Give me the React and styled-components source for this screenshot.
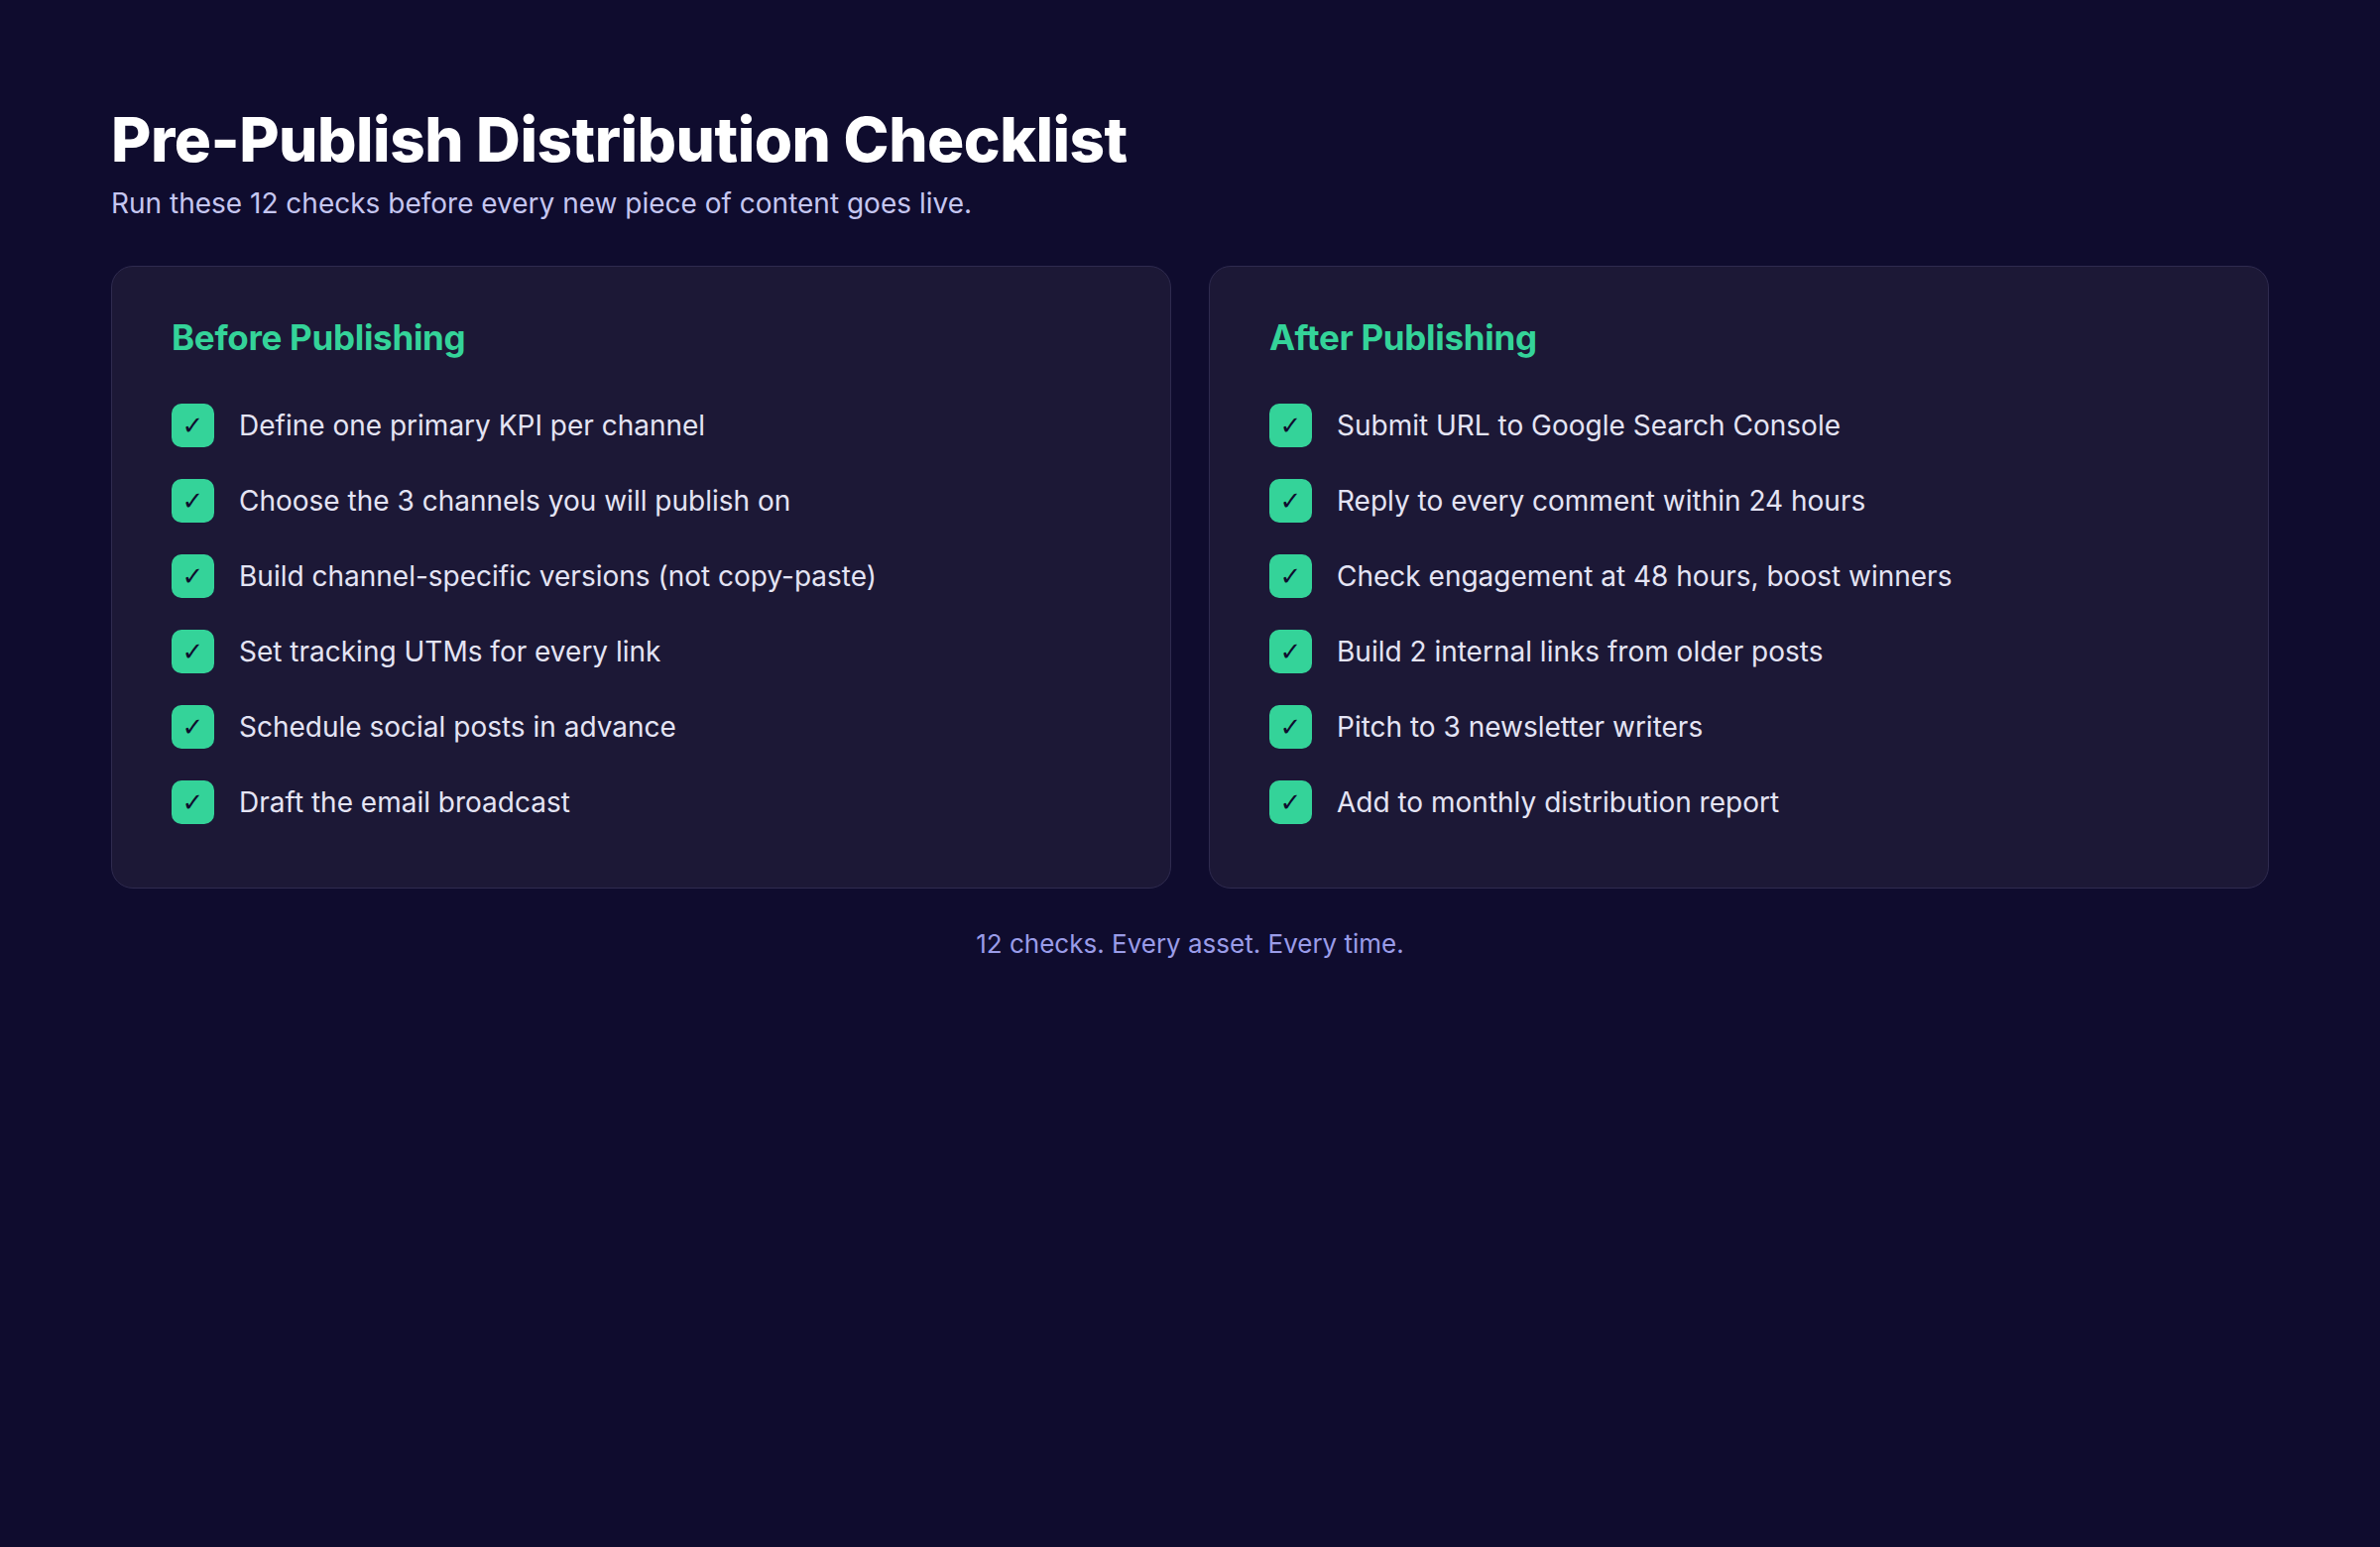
import React from "react";
import styled, { createGlobalStyle } from "styled-components";

const Global = createGlobalStyle`
  html, body { margin: 0; padding: 0; background: #0f0c2e; }
  body { font-family: Inter, "Noto Sans", sans-serif; min-height: 1560px; }
`;

const Page = styled.div`
  padding: 104px 112px 80px;
  box-sizing: border-box;
  width: 2400px;
`;
const Title = styled.h1`
  margin: 0;
  font-size: 62px;
  line-height: 1.2;
  font-weight: 800;
  letter-spacing: -0.5px;
  color: #ffffff;
`;
const Subtitle = styled.p`
  margin: 8px 0 0;
  font-size: 28px;
  line-height: 1.4;
  color: #c5c6f0;
`;
const Grid = styled.div`
  display: grid;
  grid-template-columns: 1fr 1fr;
  gap: 38px;
  margin-top: 42px;
`;
const Card = styled.section`
  background: #1c1836;
  border: 1.5px solid #2f2b4f;
  border-radius: 22px;
  padding: 50px 60px 64px;
`;
const CardTitle = styled.h2`
  margin: 0 0 46px;
  font-size: 35px;
  line-height: 1.2;
  font-weight: 700;
  color: #34d399;
  letter-spacing: -0.3px;
`;
const List = styled.ul`
  list-style: none;
  margin: 0;
  padding: 0;
  display: flex;
  flex-direction: column;
  gap: 32px;
`;
const Item = styled.li`
  display: flex;
  align-items: center;
  gap: 25px;
  height: 44px;
  font-size: 28px;
  color: #e4e4f4;
`;
const Check = styled.span`
  width: 43px;
  height: 44px;
  border-radius: 10px;
  background: #34d399;
  color: #0f0c2e;
  display: flex;
  align-items: center;
  justify-content: center;
  font-size: 26px;
  font-weight: 700;
  font-family: "DejaVu Sans", sans-serif;
  flex-shrink: 0;
`;
const Footer = styled.p`
  margin: 40px 0 0;
  text-align: center;
  font-size: 26px;
  color: #9a9ce8;
`;

const before = [
  "Define one primary KPI per channel",
  "Choose the 3 channels you will publish on",
  "Build channel-specific versions (not copy-paste)",
  "Set tracking UTMs for every link",
  "Schedule social posts in advance",
  "Draft the email broadcast",
];
const after = [
  "Submit URL to Google Search Console",
  "Reply to every comment within 24 hours",
  "Check engagement at 48 hours, boost winners",
  "Build 2 internal links from older posts",
  "Pitch to 3 newsletter writers",
  "Add to monthly distribution report",
];

const Column = ({ title, items }) => (
  <Card>
    <CardTitle>{title}</CardTitle>
    <List>
      {items.map((t) => (
        <Item key={t}>
          <Check>✓</Check>
          {t}
        </Item>
      ))}
    </List>
  </Card>
);

export default function App() {
  return (
    <Page>
      <Global />
      <Title>Pre-Publish Distribution Checklist</Title>
      <Subtitle>Run these 12 checks before every new piece of content goes live.</Subtitle>
      <Grid>
        <Column title="Before Publishing" items={before} />
        <Column title="After Publishing" items={after} />
      </Grid>
      <Footer>12 checks. Every asset. Every time.</Footer>
    </Page>
  );
}
